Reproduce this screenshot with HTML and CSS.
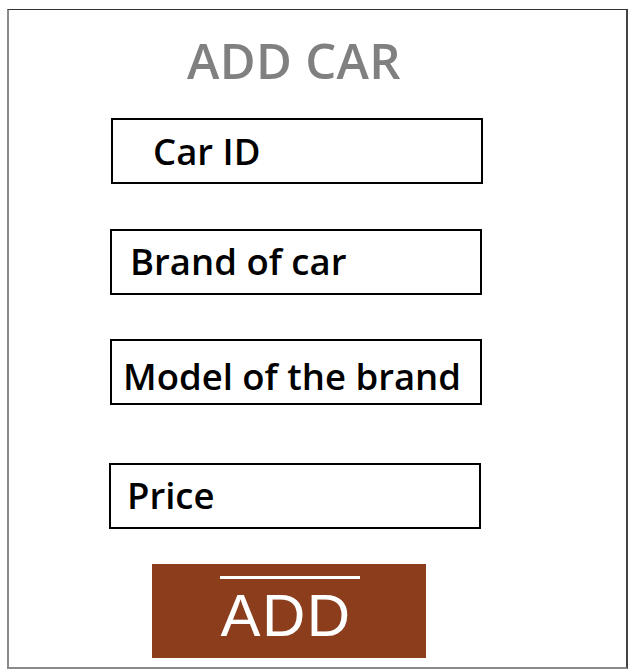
FILE: index.html
```html
<!DOCTYPE html>
<html lang="en">
<head>
    <meta charset="UTF-8">
    <meta name="viewport" content="width=device-width, initial-scale=1.0">
    <title>Add Car</title>
    <link rel="stylesheet" href="styles.css">
</head>
<body>
    <div class="frame">
        <h1 class="title">ADD CAR</h1>
        <div class="field field-id">Car ID</div>
        <div class="field field-brand">Brand of car</div>
        <div class="field field-model">Model of the brand</div>
        <div class="field field-price">Price</div>
        <button class="add-button"><span class="add-label">ADD</span></button>
    </div>
</body>
</html>
```

FILE: styles.css
```css
/* Pagina base */
body {
    margin: 0;
    background-color: #ffffff;
    font-family: "Open Sans", "Liberation Sans", sans-serif;
}

/* Marco principal */
.frame {
    box-sizing: border-box;
    width: 621px;
    height: 660px;
    margin: 9px 0 0 7px;
    border-top: 1px solid #333333;
    border-left: 2px solid #8a8a8a;
    border-right: 2px solid #444444;
    border-bottom: 2px solid #8a8a8a;
    display: flex;
    flex-direction: column;
    align-items: flex-start;
}

.title {
    margin: 22px 0 0 178px;
    font-size: 49px;
    font-weight: 600;
    line-height: 56px;
    letter-spacing: 0.3px;
    color: #808080;
}

/* Cajas de texto */
.field {
    box-sizing: border-box;
    width: 372px;
    height: 66px;
    border: 2px solid #000000;
    font-size: 36.5px;
    font-weight: 600;
    line-height: 60px;
    color: #000000;
    white-space: nowrap;
}

.field-id {
    margin: 30px 0 0 102px;
    padding-left: 40px;
    line-height: 62px;
}

.field-brand {
    margin: 45px 0 0 101px;
    padding-left: 18px;
}

.field-model {
    margin: 44px 0 0 101px;
    padding-left: 11px;
    line-height: 70px;
}

.field-price {
    margin: 58px 0 0 100px;
    padding-left: 16px;
}

/* Boton de agregar */
.add-button {
    margin: 35px 0 0 143px;
    width: 274px;
    height: 94px;
    border: none;
    padding: 12px 0 0 0;
    background-color: #8b3d1c;
    display: flex;
    justify-content: center;
    align-items: flex-start;
}

.add-label {
    display: block;
    border-top: 3px solid #ffffff;
    padding: 0 8px 0 0;
    margin-left: 2px;
    font-size: 60px;
    font-weight: 300;
    line-height: 74px;
    letter-spacing: 1.5px;
    color: #ffffff;
}
```
